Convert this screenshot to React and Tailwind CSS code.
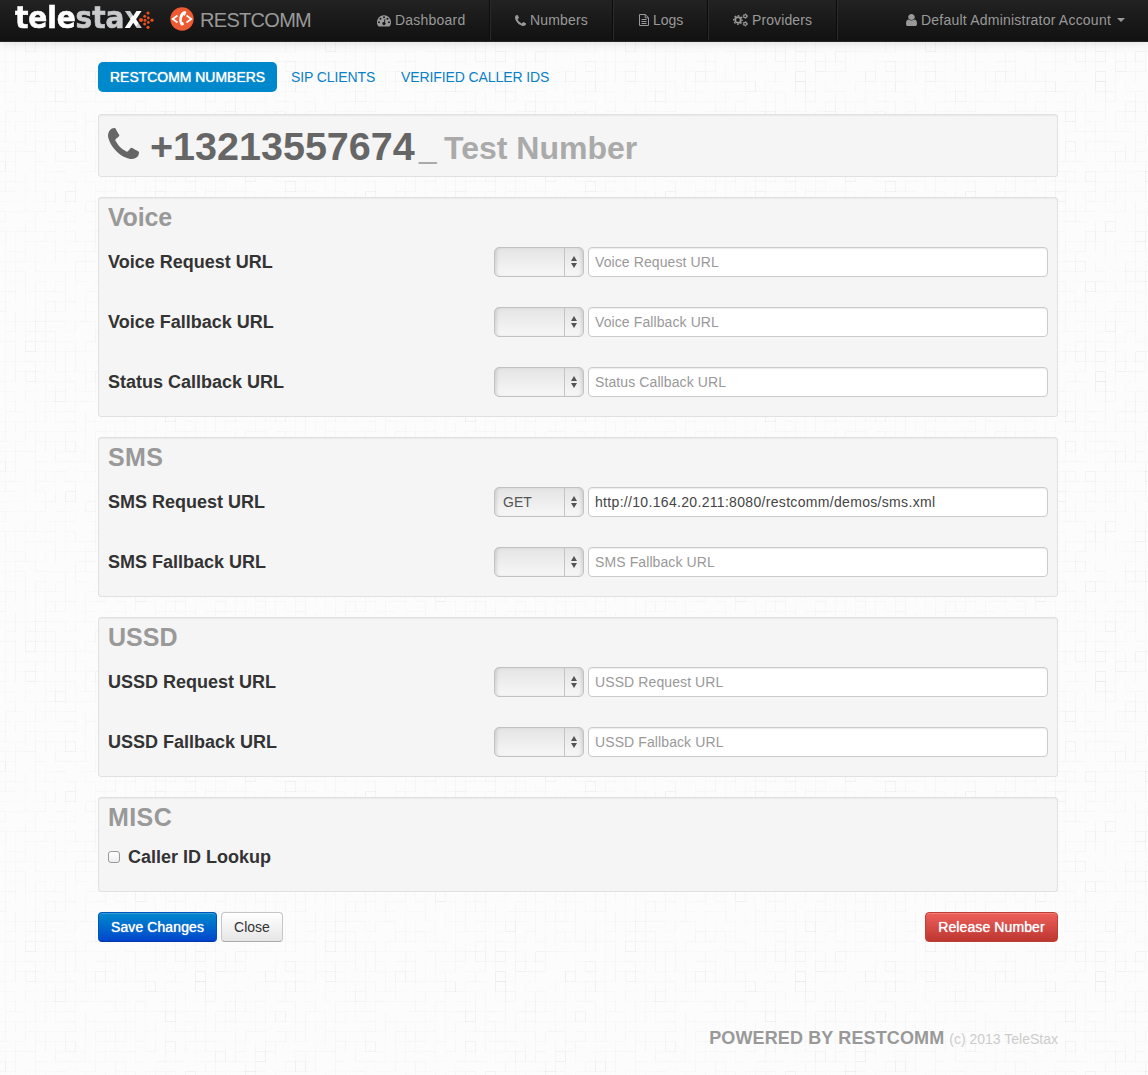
import React from 'react';

const PHONE =
  'M1408 1240q0 27-10 70.5t-20.5 68.5q-21 50-122 106-94 51-186 51-27 0-52.5-3.5t-57.5-12.5-47.5-14.5-55.5-20.5-49-18q-98-35-175-83-128-79-264.5-215.5t-215.5-264.5q-48-77-83-175-3-9-18-49t-20.5-55.5-14.5-47.5-12.5-57.5-3.5-52.5q0-92 51-186 56-101 106-122 25-10 68.5-20.5t70.5-10.5q14 0 21 3 18 6 53 76 11 19 30 54t35 63.5 31 53.5q3 4 17.5 25t21.5 35.5 7 28.5q0 20-28.5 50t-62 55-62 53-28.5 46q0 9 5 22.5t8.5 20.5 14 24 11.5 19q76 137 174 235t235 174q2 1 19 11.5t24 14 20.5 8.5 22.5 5q18 0 46-28.5t53-62 55-62 50-28.5q14 0 28.5 7t35.5 21.5 25 17.5q25 15 53.5 31t63.5 35 54 30q70 35 76 53 3 7 3 21z';
const USER =
  'M1280 1399q0 109-62.5 187t-150.5 78h-854q-88 0-150.5-78t-62.5-187q0-85 8.5-160.5t31.5-152 58.5-131 94-89 134.5-34.5q131 128 313 128t313-128q76 0 134.5 34.5t94 89 58.5 131 31.5 152 8.5 160.5zm-256-887q0 159-112.5 271.5t-271.5 112.5-271.5-112.5-112.5-271.5 112.5-271.5 271.5-112.5 271.5 112.5 112.5 271.5z';

function Phone({ className }) {
  return (
    <svg viewBox="0 128 1408 1408" className={className} fill="currentColor">
      <path d={PHONE} />
    </svg>
  );
}

function Gauge() {
  return (
    <svg viewBox="0 0 14 12" className="mt-px h-3 w-3.5" fill="currentColor">
      <path
        fillRule="evenodd"
        d="M7 .3a7 7 0 0 0-5.9 10.8q.3.4.7.4h10.400q.4 0 .7-.4A7 7 0 0 0 7 .3zM2 6.300a1 1 0 1 1 0 2 1 1 0 0 1 0-2zM3.500 2.800a1 1 0 1 1 0 2 1 1 0 0 1 0-2zM7 1.300a1 1 0 1 1 0 2 1 1 0 0 1 0-2zM10.500 2.800a1 1 0 1 1 0 2 1 1 0 0 1 0-2zM12 6.300a1 1 0 1 1 0 2 1 1 0 0 1 0-2zM8.500 4.200l-.7 3a1.550 1.550 0 1 1-.9-.25l.75-2.950z"
      />
    </svg>
  );
}

function FileText() {
  return (
    <svg viewBox="0 0 10 12" className="h-3 w-2.5" fill="none" stroke="currentColor">
      <path d="M.5.5h5.800L9.500 3.700v7.800h-9zM6.200.5v3.300h3.300M2.500 5.500h5M2.500 7.500h5M2.500 9.500h5" />
    </svg>
  );
}

function Cogs() {
  return (
    <svg viewBox="0 0 15 14" className="h-3.5 w-[15px]" fill="none" stroke="currentColor">
      <circle cx="5" cy="7" r="2.800" strokeWidth="1.800" />
      <circle cx="5" cy="7" r="4.300" strokeWidth="1.300" strokeDasharray="1.700 1.677" strokeDashoffset=".85" />
      <circle cx="12.200" cy="3.200" r="1.500" strokeWidth="1.200" />
      <circle cx="12.200" cy="3.200" r="2.300" strokeWidth=".8" strokeDasharray="1.200 1.209" />
      <circle cx="12.200" cy="10.800" r="1.500" strokeWidth="1.200" />
      <circle cx="12.200" cy="10.800" r="2.300" strokeWidth=".8" strokeDasharray="1.200 1.209" />
    </svg>
  );
}

function User() {
  return (
    <svg viewBox="0 128 1280 1536" className="h-3 w-[11px]" preserveAspectRatio="none" fill="currentColor">
      <path d={USER} />
    </svg>
  );
}

/* Faint paper texture made of 10px squares, each with slightly different edges. */
const TILE = 30;
const cells = (() => {
  let seed = 77;
  const next = () => {
    seed = (seed * 16807) % 2147483647;
    return seed / 2147483647;
  };
  const out = [];
  for (let r = 0; r < TILE; r++) {
    for (let c = 0; c < TILE; c++) {
      const right = next();
      const bottom = next();
      const box = next();
      const x = c * 10;
      const y = r * 10;
      if (right > 0.3) out.push({ d: `M${x + 9.5} ${y}v10`, o: right * 0.025 });
      if (bottom > 0.3) out.push({ d: `M${x} ${y + 9.5}h10`, o: bottom * 0.025 });
      if (box > 0.95 && c > 0 && r > 0) out.push({ d: `M${x - 0.5} ${y - 0.5}h10v10h-10z`, o: 0.025 });
    }
  }
  return out;
})();

function Texture() {
  return (
    <svg className="absolute inset-0 -z-10 h-full w-full" aria-hidden="true">
      <defs>
        <pattern id="paper" width="300" height="300" x="6" y="2" patternUnits="userSpaceOnUse">
          {cells.map((cell, i) => (
            <path key={i} d={cell.d} fill="none" stroke="#000" strokeOpacity={cell.o} />
          ))}
        </pattern>
      </defs>
      <rect width="100%" height="100%" fill="#fcfcfc" />
      <rect width="100%" height="100%" fill="url(#paper)" />
    </svg>
  );
}

function Logo() {
  const dots = [
    [2, 10, 2], [5.700, 6.300, 1.500], [6, 10.200, 1.500], [5.700, 14.100, 1.500],
    [9, 3, 1.600], [9.300, 8, 1.400], [9.300, 12.400, 1.400], [9, 17.300, 1.600], [13, 10.200, 1.600],
  ];
  return (
    <div className="ml-[15px] flex w-[156px] shrink-0 items-start">
      <div className="-mt-[2px] flex h-11 w-[127px] origin-[0_30px] scale-y-[1.06] font-['DejaVu_Sans'] text-[28px] leading-[42px] font-bold tracking-[-0.1px] text-white">
        <span className="[-webkit-text-stroke:0.6px_#fff]">tele</span>
        <span className="text-[#c9cacc] [-webkit-text-stroke:0.6px_#c9cacc]">sta</span>
        <span className="bg-[linear-gradient(128deg,#c9cacc_43%,#fff_44%,#fff_65%,#c9cacc_66%)] bg-clip-text text-transparent">x</span>
      </div>
      <svg viewBox="0 0 15 21" className="mt-[10px] -ml-[3px] h-[21px] w-[15px]" fill="#e8501f">
        {dots.map(([cx, cy, r], i) => (
          <circle key={i} cx={cx} cy={cy} r={r} />
        ))}
      </svg>
    </div>
  );
}

function Brand() {
  return (
    <div className="flex w-[181px] shrink-0 items-start text-[#999]">
      <svg viewBox="0 0 24 24" className="mt-[7px] -ml-px h-6 w-6">
        <circle cx="12" cy="12" r="11.700" fill="#ee5a31" />
        <path d="M7.500 8.500 2.700 12l4.800 3.500M16.500 8.500l4.800 3.500-4.800 3.500" fill="none" stroke="#fff" strokeWidth="1.700" />
        <path d="M15.200 4c-3.300 0-5.900 4-5.900 8.500 0 3 .8 5.200 2.400 6.300l2.300-1-.8-2.800-1.300 0c-.3-2.500.3-5 1.400-6.700l1.500.5 1.600-3.300z" fill="#fff" />
      </svg>
      <span className="ml-[6px] text-[20px] leading-[41px] tracking-[-0.7px]">RESTCOMM</span>
    </div>
  );
}

function NavItem({ icon, label, className }) {
  return (
    <div className={`flex h-10 items-center gap-1 border-r border-[#2a2a2a] shadow-[inset_-1px_0_0_#0c0c0c] ${className}`}>
      {icon}
      <span>{label}</span>
    </div>
  );
}

function Navbar() {
  return (
    <header className="flex h-[42px] bg-linear-to-b from-[#222] to-[#111] text-sm text-[#999] shadow-[0_1px_10px_rgba(0,0,0,0.12)] border-b border-[#252525]">
      <Logo />
      <Brand />
      <nav className="flex">
        <NavItem icon={<Gauge />} label="Dashboard" className="w-[139px] pl-[25px] tracking-[0.22px]" />
        <NavItem icon={<Phone className="size-[11px]" />} label="Numbers" className="w-[123px] pl-6 tracking-[0.15px]" />
        <NavItem icon={<FileText />} label="Logs" className="w-[95px] pl-[25px]" />
        <NavItem icon={<Cogs />} label="Providers" className="w-[129px] pl-6 tracking-[0.1px]" />
      </nav>
      <div className="ml-auto flex h-10 items-center gap-1 pr-[23px]">
        <User />
        <span className="tracking-[0.22px]">Default Administrator Account</span>
        <span className="ml-0.5 border-x-4 border-t-4 border-x-transparent border-t-[#999]" />
      </div>
    </header>
  );
}

function Panel({ className, children }) {
  return (
    <section className={`mb-5 rounded-[3px] border border-[#e1e1e1] bg-[#f5f5f5] px-[9px] shadow-[inset_0_1px_1px_rgba(0,0,0,0.05)] ${className}`}>
      {children}
    </section>
  );
}

function Title({ children, className = '' }) {
  return <h2 className={`pt-px text-[25px] leading-[37px] font-bold text-[#999] ${className}`}>{children}</h2>;
}

function Row({ label, method = '', value }) {
  return (
    <div className="mb-[30px] flex h-[30px] items-center">
      <label className="w-[386px] text-[18px] leading-[30px] font-bold text-[#333]">{label}</label>
      <div className="flex h-[30px] w-[90px] rounded-[5px] border border-[#c2c2c2] bg-linear-to-b from-[#e4e4e4] to-[#f7f7f7] text-sm text-[#555] shadow-[inset_3px_0_3px_-1px_rgba(0,0,0,0.1),inset_-3px_0_3px_-1px_rgba(0,0,0,0.1)]">
        <span className="w-[70px] border-r border-[#c4c4c4] pl-2 leading-7">{method}</span>
        <span className="flex flex-1 flex-col items-center justify-center gap-[2px] pr-px">
          <i className="border-x-[3.5px] border-b-[5px] border-x-transparent border-b-[#555]" />
          <i className="border-x-[3.5px] border-t-[5px] border-x-transparent border-t-[#555]" />
        </span>
      </div>
      <input
        className={`ml-1 h-[30px] w-[460px] rounded-[4px] border border-[#ccc] bg-white px-1.5 text-sm text-[#444] shadow-[inset_0_1px_1px_rgba(0,0,0,0.075)] placeholder:text-[#999] ${value ? 'tracking-[0.32px]' : 'tracking-[0.1px]'}`}
        placeholder={label}
        defaultValue={value}
      />
    </div>
  );
}

export default function App() {
  return (
    <div className="relative isolate h-[1075px] w-[1148px] overflow-hidden font-['Liberation_Sans',Arial,sans-serif]">
      <Texture />
      <Navbar />
      <main className="ml-[98px] w-[960px] pt-5">
        <div className="mb-[22px] flex h-[30px] text-sm leading-[30px] text-[#0a80c8]">
          <span className="w-[179px] rounded-[5px] bg-[#0088cc] pl-3 tracking-[-0.03px] text-white [text-shadow:0_0_1px_#fff]">RESTCOMM NUMBERS</span>
          <span className="ml-[14px] w-[110px] tracking-[-0.1px]">SIP CLIENTS</span>
          <span className="tracking-[-0.1px]">VERIFIED CALLER IDS</span>
        </div>

        <Panel className="flex h-[63px] items-start font-bold">
          <Phone className="mt-[13px] size-[31px] text-[#666]" />
          <span className="ml-[11px] w-[269px] text-[39.5px] leading-[62px] text-[#666]">+13213557674</span>
          <span className="w-[25px] text-[31.5px] leading-[64px] font-normal text-[#aaa]">_</span>
          <span className="text-[32px] leading-[67px] text-[#aaa]">Test Number</span>
        </Panel>

        <Panel className="h-[220px]">
          <Title className="tracking-[-0.2px]">Voice</Title>
          <div className="h-[11px]" />
          <Row label="Voice Request URL" />
          <Row label="Voice Fallback URL" />
          <Row label="Status Callback URL" />
        </Panel>

        <Panel className="h-[160px]">
          <Title className="tracking-[0.4px]">SMS</Title>
          <div className="h-[11px]" />
          <Row label="SMS Request URL" method="GET" value="http://10.164.20.211:8080/restcomm/demos/sms.xml" />
          <Row label="SMS Fallback URL" />
        </Panel>

        <Panel className="h-[160px]">
          <Title>USSD</Title>
          <div className="h-[11px]" />
          <Row label="USSD Request URL" />
          <Row label="USSD Fallback URL" />
        </Panel>

        <Panel className="h-[95px]">
          <Title className="tracking-[0.4px]">MISC</Title>
          <label className="mt-[6px] flex h-[30px] items-center text-[18px] font-bold text-[#333]">
            <span className="mr-2 size-3 rounded-[3px] border border-[#999] bg-linear-to-b from-white to-[#eee]" />
            Caller ID Lookup
          </label>
        </Panel>

        <div className="flex h-[30px] gap-1 text-sm leading-7">
          <button className="w-[119px] rounded-[4px] border border-[#0055bb] border-b-[#0037a0] bg-linear-to-b from-[#0088cc] to-[#0044cc] tracking-[0.1px] text-white shadow-[inset_0_1px_0_rgba(255,255,255,0.2)] [text-shadow:0_0_1px_#fff]">Save Changes</button>
          <button className="w-[62px] rounded-[4px] border border-[#c5c5c5] border-b-[#aaa] bg-linear-to-b from-white to-[#e6e6e6] text-[#333]">Close</button>
          <button className="ml-auto w-[133px] rounded-[4px] border border-[#bd3f38] bg-linear-to-b from-[#ee5f5b] to-[#bd362f] tracking-[0.1px] text-white shadow-[inset_0_1px_0_rgba(255,255,255,0.2)] [text-shadow:0_0_1px_#fff]">Release Number</button>
        </div>

        <footer className="mt-[84px] flex items-baseline justify-end gap-[5px] leading-6">
          <span className="text-[18px] font-bold tracking-[0.13px] text-[#999]">POWERED BY RESTCOMM</span>
          <span className="text-sm text-[#ccc]">(c) 2013 TeleStax</span>
        </footer>
      </main>
    </div>
  );
}
